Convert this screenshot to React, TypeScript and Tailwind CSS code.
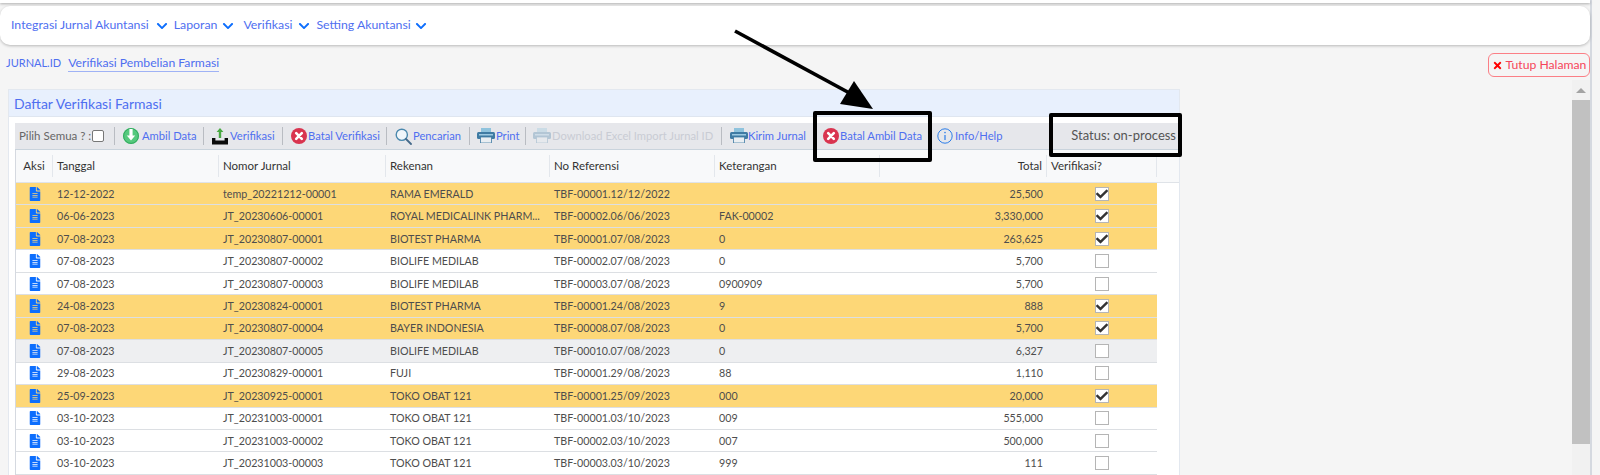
import React from "react";
import { FaChevronDown, FaFileAlt, FaTimes, FaCheck } from "react-icons/fa";

const rows: [string, string, string, string, string, string, boolean, string][] = [
  ["12-12-2022", "temp_20221212-00001", "RAMA EMERALD", "TBF-00001.12/12/2022", "", "25,500", true, "y"],
  ["06-06-2023", "JT_20230606-00001", "ROYAL MEDICALINK PHARM...", "TBF-00002.06/06/2023", "FAK-00002", "3,330,000", true, "y"],
  ["07-08-2023", "JT_20230807-00001", "BIOTEST PHARMA", "TBF-00001.07/08/2023", "0", "263,625", true, "y"],
  ["07-08-2023", "JT_20230807-00002", "BIOLIFE MEDILAB", "TBF-00002.07/08/2023", "0", "5,700", false, "w"],
  ["07-08-2023", "JT_20230807-00003", "BIOLIFE MEDILAB", "TBF-00003.07/08/2023", "0900909", "5,700", false, "w"],
  ["24-08-2023", "JT_20230824-00001", "BIOTEST PHARMA", "TBF-00001.24/08/2023", "9", "888", true, "y"],
  ["07-08-2023", "JT_20230807-00004", "BAYER INDONESIA", "TBF-00008.07/08/2023", "0", "5,700", true, "y"],
  ["07-08-2023", "JT_20230807-00005", "BIOLIFE MEDILAB", "TBF-00010.07/08/2023", "0", "6,327", false, "g"],
  ["29-08-2023", "JT_20230829-00001", "FUJI", "TBF-00001.29/08/2023", "88", "1,110", false, "w"],
  ["25-09-2023", "JT_20230925-00001", "TOKO OBAT 121", "TBF-00001.25/09/2023", "000", "20,000", true, "y"],
  ["03-10-2023", "JT_20231003-00001", "TOKO OBAT 121", "TBF-00001.03/10/2023", "009", "555,000", false, "w"],
  ["03-10-2023", "JT_20231003-00002", "TOKO OBAT 121", "TBF-00002.03/10/2023", "007", "500,000", false, "w"],
  ["03-10-2023", "JT_20231003-00003", "TOKO OBAT 121", "TBF-00003.03/10/2023", "999", "111", false, "w"],
];

const Sep = () => <span className="w-px h-[18px] bg-[#b9bcc2] shrink-0" />;

const RedX = () => (
  <svg width="16" height="16" viewBox="0 0 16 16" className="shrink-0">
    <circle cx="8" cy="8" r="8" fill="#d9344f" />
    <path d="M5.2 5.2l5.6 5.6M10.8 5.2l-5.6 5.6" stroke="#fff" strokeWidth="2.6" strokeLinecap="round" />
  </svg>
);
const Globe = () => (
  <svg width="16" height="16" viewBox="0 0 16 16" className="shrink-0">
    <circle cx="8" cy="8" r="8" fill="#55c97d" />
    <circle cx="8" cy="8" r="7.4" fill="none" stroke="#2da55a" strokeWidth="0.9" />
    <path d="M6.4 1h3.2v6.4h2.6L8 12.4 3.8 7.4h2.6z" fill="#fff" />
  </svg>
);
const Upload = () => (
  <svg width="16" height="17" viewBox="0 0 16 17" className="shrink-0">
    <path d="M8 0l3.4 4H9.2v6H6.8V4H4.6z" fill="#49a942" />
    <path d="M0 10h3.4v2.6h9.2V10H16v6.4H0z" fill="#0b0b0b" />
  </svg>
);
const Search = () => (
  <svg width="17" height="17" viewBox="0 0 17 17" fill="none" className="shrink-0">
    <circle cx="6.8" cy="6.8" r="5.6" stroke="#4a88ad" strokeWidth="1.4" fill="#f0f6fa" />
    <path d="M11 11l5 5" stroke="#44698a" strokeWidth="1.8" strokeLinecap="round" />
  </svg>
);
const Printer = ({ faded }: { faded?: boolean }) => (
  <svg width="18" height="15" viewBox="0 0 18 15" className={faded ? "shrink-0 opacity-30" : "shrink-0"}>
    <rect x="4" y="0" width="10" height="5" fill="#8fc3dd" />
    <rect x="0" y="4" width="18" height="7" rx="1.5" fill="#3f7ba3" />
    <rect x="2" y="6" width="14" height="1.5" fill="#9cc9e2" />
    <rect x="3.5" y="9" width="11" height="6" fill="#e9eef2" stroke="#3f7ba3" strokeWidth="0.8" />
  </svg>
);
const InfoIcon = () => (
  <svg width="16" height="16" viewBox="0 0 16 16" fill="none" className="shrink-0">
    <circle cx="8" cy="8" r="7.2" stroke="#2b7de9" strokeWidth="1" />
    <path d="M8 7v5" stroke="#2b7de9" strokeWidth="1.2" />
    <circle cx="8" cy="4.6" r="0.8" fill="#2b7de9" />
  </svg>
);

const Tool = ({ icon, label, faded, className }: { icon: React.ReactNode; label: string; faded?: boolean; className: string }) => (
  <span className={`flex items-center shrink-0 ${className}`}>
    {icon}
    <span className={faded ? "text-[#c9ccd4]" : "text-[#4f6ff0]"}>{label}</span>
  </span>
);

const Check = ({ on }: { on: boolean }) => (
  <span className="w-[14px] h-[14px] bg-white border border-[#b5b5b5] flex items-center justify-center">
    {on && <FaCheck className="text-[#333] text-[12px]" />}
  </span>
);

const grid = "grid w-[1141px] grid-cols-[37px_166px_167px_164px_165px_165px_167px_110px]";

export default function App() {
  return (
    <div className="relative h-[475px] overflow-hidden bg-[#f5f5f5] font-['Lato','Liberation_Sans',sans-serif] text-[12px]">
      <div className="w-[1592px] h-[475px] border-r-2 border-[#d5d9e0] flex flex-col">
        <div className="h-[3px] bg-white shadow-[0_1px_3px_rgba(0,0,0,0.3)] shrink-0" />
        <nav className="mt-[3px] h-[39px] shrink-0 bg-white rounded-[10px] shadow-[0_1px_3px_rgba(0,0,0,0.25)] flex items-center pl-[11px] text-[12.3px] text-[#4f6ff0]">
          <span>Integrasi Jurnal Akuntansi</span>
          <FaChevronDown className="ml-[7px] mr-[6px] text-[#0d6efd] text-[12px]" />
          <span>Laporan</span>
          <FaChevronDown className="ml-[5px] mr-[9px] text-[#0d6efd] text-[12px]" />
          <span>Verifikasi</span>
          <FaChevronDown className="ml-[6px] mr-[6px] text-[#0d6efd] text-[12px]" />
          <span>Setting Akuntansi</span>
          <FaChevronDown className="ml-[4px] text-[#0d6efd] text-[12px]" />
        </nav>
        <div className="flex items-start justify-between mt-[8px] h-[24px] shrink-0">
          <div className="flex items-center pl-[6px] text-[#4f6ff0] pt-[2px]">
            <span className="text-[11px] mr-[7px]">JURNAL.ID</span>
            <span className="text-[12.2px] border-b border-[#9fb2f5] leading-[16px]">Verifikasi Pembelian Farmasi</span>
          </div>
          <button className="w-[102px] h-[24px] border border-[#fb7f86] rounded-[6px] text-[#f5455a] text-[12.2px] flex items-center justify-center gap-[3px] whitespace-nowrap">
            <FaTimes className="text-[#f00] text-[11px]" />
            Tutup Halaman
          </button>
        </div>
        <div className="flex flex-1 min-h-0 mt-[3px] pl-[8px]">
          <section className="w-[1172px] h-[420px] mt-[9px] shrink-0 border border-[#e3e8ef] bg-white">
            <h2 className="h-[27px] bg-[#e8f0fd] border-b border-[#dfe6f0] text-[14px] text-[#4f6ff0] pl-[5px] flex items-center">Daftar Verifikasi Farmasi</h2>
            <div className="mt-[6px] ml-[6px] h-[27px] bg-[#e6e7eb] border-b border-[#c9d3dc] flex items-center pl-[4px] text-[11.2px] whitespace-nowrap">
              <span className="text-[#666] text-[11.5px] w-[73px] shrink-0">Pilih Semua ? :</span>
              <span className="w-[12px] h-[12px] bg-white border border-[#777] rounded-[2px] mr-[10px] shrink-0" />
              <Sep />
              <Tool className="w-[88px] pl-[8px] gap-[3px]" icon={<Globe />} label="Ambil Data" />
              <Sep />
              <Tool className="w-[78px] pl-[8px] gap-[2px]" icon={<Upload />} label="Verifikasi" />
              <Sep />
              <Tool className="w-[103px] pl-[8px] gap-[1px]" icon={<RedX />} label="Batal Verifikasi" />
              <Sep />
              <Tool className="w-[82px] pl-[8px] gap-[1px]" icon={<Search />} label="Pencarian" />
              <Sep />
              <Tool className="w-[55px] pl-[7px] gap-[1px]" icon={<Printer />} label="Print" />
              <Sep />
              <Tool className="w-[195px] pl-[7px] gap-[1px]" faded icon={<Printer faded />} label="Download Excel Import Jurnal ID" />
              <Sep />
              <Tool className="w-[93px] pl-[8px]" icon={<Printer />} label="Kirim Jurnal" />
              <Tool className="w-[114px] pl-[8px] gap-[1px]" icon={<RedX />} label="Batal Ambil Data" />
              <Tool className="pl-[8px] gap-[2px]" icon={<InfoIcon />} label="Info/Help" />
              <span className="flex-1" />
              <span className="text-[13px] text-[#555] mr-[3px]">Status: on-process</span>
            </div>
            <div className="ml-[6px] border-l border-[#d5d9e0]">
              <div className="h-[33px] bg-[#f8f9fa] border-b border-[#dfe3e8]">
                <div className={`${grid} h-full items-center text-[#333] text-[11.5px]`}>
                  {["Aksi", "Tanggal", "Nomor Jurnal", "Rekenan", "No Referensi", "Keterangan", "Total", "Verifikasi?"].map((h, i) => (
                    <span key={h} className={`h-[22px] flex items-center border-r border-[#e3e7ec] px-[4px] ${i === 0 ? "justify-center px-0" : ""} ${i === 6 ? "justify-end" : ""}`}>{h}</span>
                  ))}
                </div>
              </div>
              {rows.map((r, i) => (
                <div key={i} className={`${grid} h-[22.46px] items-center border-b border-[#dcdfe3] text-[#4d4d4d] text-[10.7px] whitespace-nowrap ${r[7] === "y" ? "bg-[#fdd777]" : r[7] === "g" ? "bg-[#eeeff1]" : "bg-white"}`}>
                  <span className="flex justify-center"><FaFileAlt className="text-[#0d6efd] text-[14px]" /></span>
                  <span className="px-[4px]">{r[0]}</span>
                  <span className="px-[4px]">{r[1]}</span>
                  <span className="px-[4px]">{r[2]}</span>
                  <span className="px-[4px]">{r[3]}</span>
                  <span className="px-[4px]">{r[4]}</span>
                  <span className="px-[4px] text-right">{r[5]}</span>
                  <span className="flex justify-center"><Check on={r[6]} /></span>
                </div>
              ))}
            </div>
          </section>
          <div className="flex-1" />
          <div className="w-[18px] bg-[#f1f1f1] shrink-0 flex flex-col">
            <div className="h-[20px] flex items-center justify-center">
              <span className="w-0 h-0 border-x-[5px] border-x-transparent border-b-[5px] border-b-[#a3a3a3]" />
            </div>
            <div className="h-[344px] bg-[#c1c1c1]" />
          </div>
        </div>
      </div>

      {/* annotations laid over the screenshot */}
      <div className="absolute left-[813px] top-[111px] w-[119px] h-[51px] border-[4px] border-black rounded-[2px]" />
      <div className="absolute left-[1049px] top-[113px] w-[133px] h-[44px] border-[4px] border-black rounded-[2px]" />
      <svg className="absolute left-[730px] top-[25px]" width="150" height="90" viewBox="0 0 150 90">
        <path d="M5 6L125 71" stroke="#000" strokeWidth="3.6" />
        <path d="M143 84L110 79L124 56z" fill="#000" />
      </svg>
    </div>
  );
}
